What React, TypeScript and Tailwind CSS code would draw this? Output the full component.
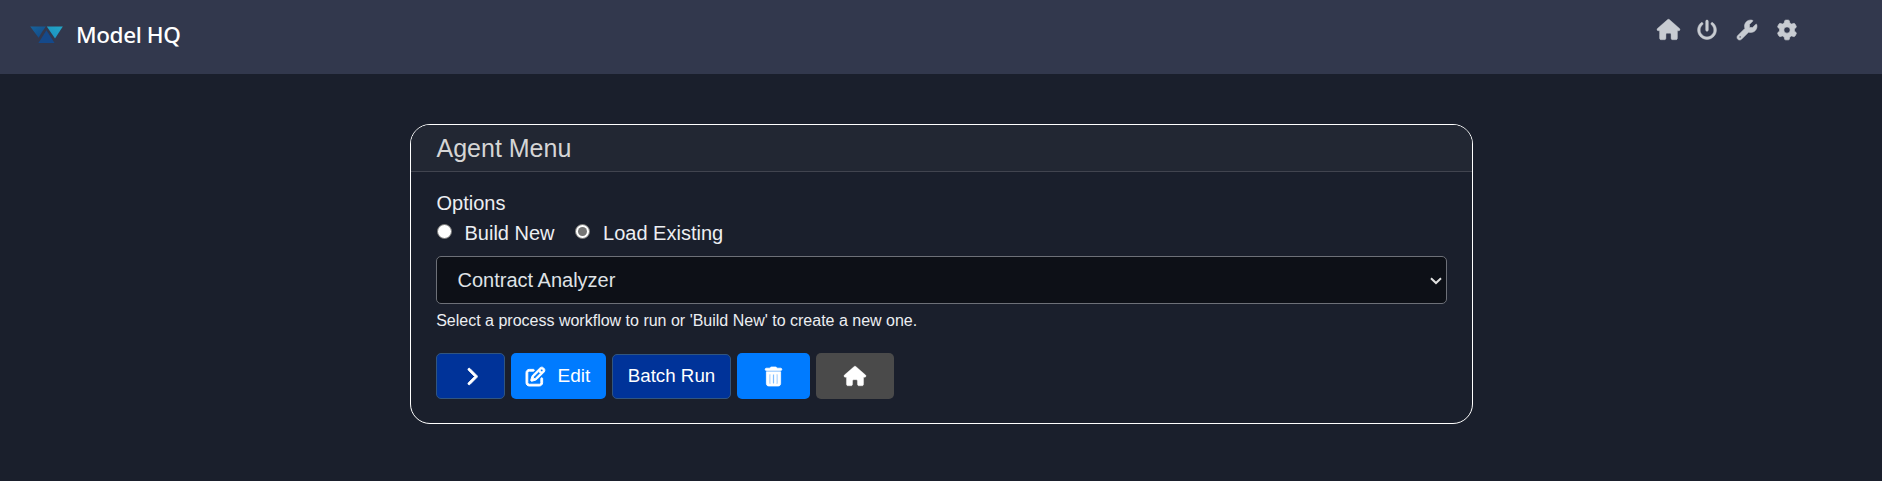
import { useState } from "react";
import {
  FaChevronRight,
  FaGear,
  FaHouse,
  FaPowerOff,
  FaRegPenToSquare,
  FaTrashCan,
  FaWrench,
} from "react-icons/fa6";

function Logo() {
  return (
    <svg className="h-[17px] w-[33px]" viewBox="0 0 33 17" aria-hidden="true">
      <defs>
        <linearGradient id="left" x1="0" y1="0" x2="1" y2="1">
          <stop offset="0" stopColor="#17649c" />
          <stop offset="1" stopColor="#124684" />
        </linearGradient>
        <linearGradient id="right" x1="0" y1="1" x2="1" y2="0">
          <stop offset="0" stopColor="#1a8fc0" />
          <stop offset="1" stopColor="#23a6c6" />
        </linearGradient>
      </defs>
      <path d="M0.2 0.4H15.8L12 6L8.6 11.8Z" fill="url(#left)" />
      <path d="M16.8 0.4H32.8L25 12.6Z" fill="url(#right)" />
      <path d="M16.4 4.2L24.6 16.9H8.4Z" fill="#15498a" />
    </svg>
  );
}

function TopBar() {
  return (
    <header className="flex h-[74px] items-start justify-between bg-[#32384d] pl-[30px] pr-[85px]">
      <div className="flex h-[69px] items-center gap-[13px]">
        <Logo />
        <span className="font-['Noto_Sans',sans-serif] text-[22.5px] font-medium leading-[30px] tracking-[-0.4px] text-white">
          Model HQ
        </span>
      </div>
      <nav className="flex h-[59px] items-center gap-[20px] text-[20px] text-[#c8ccd2]">
        <FaHouse strokeWidth={10} className="-mr-[3px] h-[21px] w-[23px] overflow-visible" />
        <FaPowerOff strokeWidth={14} className="overflow-visible" />
        <FaWrench strokeWidth={14} className="overflow-visible" />
        <FaGear strokeWidth={14} className="overflow-visible" />
      </nav>
    </header>
  );
}

function Radio({ label, checked, onChange }: { label: string; checked: boolean; onChange: () => void }) {
  return (
    <label className="flex items-center">
      <input type="radio" name="mode" checked={checked} onChange={onChange} className="peer sr-only" />
      <span className="mb-[3px] mr-[13px] flex size-[15px] items-center justify-center rounded-full border border-[#767676] bg-white">
        {checked && <span className="size-[9px] rounded-full bg-[#757575]" />}
      </span>
      {label}
    </label>
  );
}

export default function App() {
  const [mode, setMode] = useState("load");
  return (
    <div className="flex h-[481px] flex-col bg-[#1a1f2c] font-['Liberation_Sans',Arial,sans-serif]">
      <TopBar />
      <main className="mx-auto mt-[50px] flex h-[300px] w-[1063px] flex-col overflow-hidden rounded-[20px] border border-white">
        <h1 className="flex h-[47px] shrink-0 items-center border-b border-[#41444f] bg-[#222733] pl-[26px] pt-[2px] text-[25px] text-[#d5d5d5]">
          Agent Menu
        </h1>
        <div className="flex flex-col px-[25px] pt-[16px] text-[20px] leading-[30px] text-[#eceef2]">
          <div className="pl-px">Options</div>
          <div className="flex gap-[20.5px] pl-px">
            <Radio label="Build New" checked={mode === "new"} onChange={() => setMode("new")} />
            <Radio label="Load Existing" checked={mode === "load"} onChange={() => setMode("load")} />
          </div>
          <div className="mt-[8px] flex h-[48px] items-center justify-between rounded-[5px] border border-[#6d7078] bg-[#0d1017] pl-[21px] pr-[4px] text-[#dfe2e6]">
            Contract Analyzer
            <svg className="mt-[2px] h-[8px] w-[12px]" viewBox="0 0 12 8" fill="none">
              <path d="M1 1.2L6 6L11 1.2" stroke="#e0e0e0" strokeWidth="2" />
            </svg>
          </div>
          <p className="mt-[5px] pl-[0.7px] text-[16px] leading-[24px]">
            Select a process workflow to run or &apos;Build New&apos; to create a new one.
          </p>
          <div className="mt-[20px] flex items-end gap-[6px] text-[19px] text-white">
            <button className="flex h-[46px] w-[69px] items-center justify-center rounded-[5px] border border-[#31557f] bg-[#003399] pl-[2px]">
              <FaChevronRight strokeWidth={22} className="overflow-visible" />
            </button>
            <button className="flex h-[46px] w-[95px] items-center gap-[13px] rounded-[5px] bg-[#007bff] pl-[15px]">
              <FaRegPenToSquare strokeWidth={26} className="overflow-visible text-[19px]" />
              Edit
            </button>
            <button className="flex h-[45px] w-[119px] items-center justify-center rounded-[5px] border border-[#31557f] bg-[#003399] pb-[2px] pl-px text-[18.75px]">
              Batch Run
            </button>
            <button className="flex h-[46px] w-[73px] items-center justify-center rounded-[5px] bg-[#007bff] pl-px">
              <FaTrashCan strokeWidth={20} className="overflow-visible text-[19px]" />
            </button>
            <button className="flex h-[46px] w-[78px] items-center justify-center rounded-[5px] bg-[#4a4a4a]">
              <FaHouse strokeWidth={10} className="h-[20px] w-[22px] overflow-visible" />
            </button>
          </div>
        </div>
      </main>
    </div>
  );
}
